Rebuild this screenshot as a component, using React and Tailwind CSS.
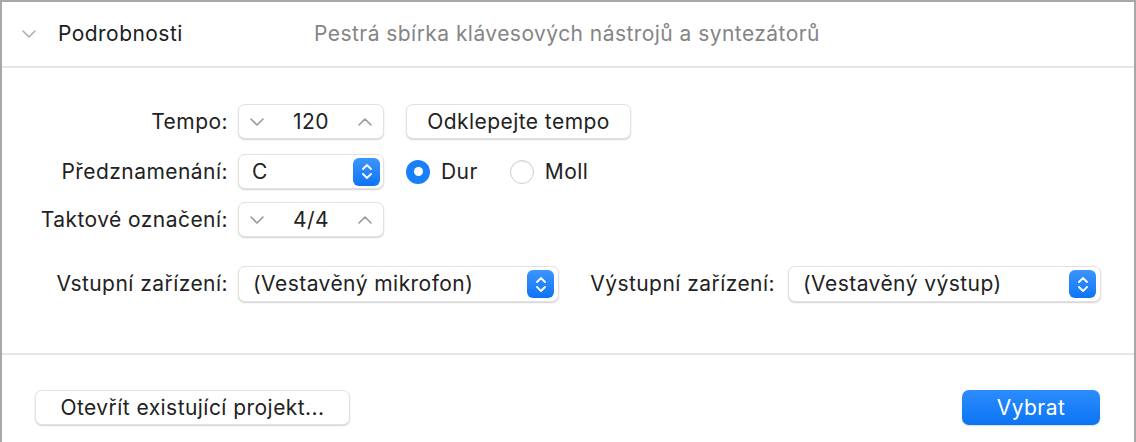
import React, { useState } from 'react';

const font = { fontFamily: 'Inter, "Noto Sans", "Liberation Sans", sans-serif', letterSpacing: '0.45px' };

const Chevron = ({ up, className }) => (
  <svg viewBox="0 0 14 8" className={className} fill="none" stroke="currentColor" strokeWidth="1.6" strokeLinecap="round" strokeLinejoin="round">
    {up ? <path d="M1 7 L7 1 L13 7" /> : <path d="M1 1 L7 7 L13 1" />}
  </svg>
);

const PopupArrows = () => (
  <div className="w-[27px] h-[28px] rounded-[6px] bg-gradient-to-b from-[#3a95fd] to-[#0a74f5] flex flex-col items-center justify-center gap-[3px]">
    <svg viewBox="0 0 10 6" className="w-[10px] h-[6px]" fill="none" stroke="white" strokeWidth="1.8" strokeLinecap="round" strokeLinejoin="round">
      <path d="M1 5 L5 1 L9 5" />
    </svg>
    <svg viewBox="0 0 10 6" className="w-[10px] h-[6px]" fill="none" stroke="white" strokeWidth="1.8" strokeLinecap="round" strokeLinejoin="round">
      <path d="M1 1 L5 5 L9 1" />
    </svg>
  </div>
);

const Box = ({ className = '', children }) => (
  <div className={`bg-white rounded-[7px] border border-[#e2e2e2] shadow-[0_1px_1.5px_rgba(0,0,0,0.18)] flex items-center ${className}`}>
    {children}
  </div>
);

const Stepper = ({ value }) => (
  <Box className="w-[146px] h-[35px] px-[11px] justify-between">
    <Chevron className="w-[14px] h-[8px] text-[#9a9a9a]" />
    <span className="text-[#222]">{value}</span>
    <Chevron up className="w-[14px] h-[8px] text-[#9a9a9a]" />
  </Box>
);

const Select = ({ value, width }) => (
  <Box className={`${width} h-[36px] pl-[14px] pr-[4px] justify-between`}>
    <span className="text-[#222]">{value}</span>
    <PopupArrows />
  </Box>
);

const Radio = ({ checked, label, onClick }) => (
  <button onClick={onClick} className="flex items-center gap-[11px]">
    {checked ? (
      <span className="w-[24px] h-[24px] rounded-full bg-[#1a7ffb] flex items-center justify-center">
        <span className="w-[9px] h-[9px] rounded-full bg-white" />
      </span>
    ) : (
      <span className="w-[24px] h-[24px] rounded-full bg-white border border-[#cfcfcf] shadow-[inset_0_1px_1px_rgba(0,0,0,0.08)]" />
    )}
    <span className="text-[#222]">{label}</span>
  </button>
);

const Label = ({ children }) => (
  <div className="w-[226px] text-right text-[#222] shrink-0 whitespace-nowrap">{children}</div>
);

export default function App() {
  const [mode, setMode] = useState('dur');

  return (
    <div style={font} className="w-[1136px] h-[442px] bg-white text-[21px] border-t-2 border-x-2 border-t-[#a8a8a8] border-x-[#a8a8a8] flex flex-col overflow-hidden">
      <div className="h-[66px] border-b-2 border-[#e6e6e6] flex items-center shrink-0">
        <Chevron className="ml-[20px] w-[14px] h-[8px] text-[#b0b0b0]" />
        <span className="ml-[22px] w-[256px] text-[#1d1d1d]">Podrobnosti</span>
        <span className="text-[#858585]">Pestrá sbírka klávesových nástrojů a syntezátorů</span>
      </div>

      <div className="h-[287px] border-b-2 border-[#e6e6e6] pt-[36px] shrink-0">
        <div className="flex items-center gap-[10px]">
          <Label>Tempo:</Label>
          <Stepper value="120" />
          <button className="ml-[12px] h-[35px] w-[225px] bg-white rounded-[7px] border border-[#e2e2e2] shadow-[0_1px_1.5px_rgba(0,0,0,0.18)] text-[#222]">
            Odklepejte tempo
          </button>
        </div>

        <div className="flex items-center gap-[10px] mt-[15px]">
          <Label>Předznamenání:</Label>
          <Box className="w-[146px] h-[35px] pl-[13px] pr-[3px] justify-between">
            <span className="text-[#222]">C</span>
            <PopupArrows />
          </Box>
          <div className="ml-[12px] flex items-center gap-[32px]">
            <Radio checked={mode === 'dur'} label="Dur" onClick={() => setMode('dur')} />
            <Radio checked={mode === 'moll'} label="Moll" onClick={() => setMode('moll')} />
          </div>
        </div>

        <div className="flex items-center gap-[10px] mt-[13px]">
          <Label>Taktové označení:</Label>
          <Stepper value="4/4" />
        </div>

        <div className="flex items-center gap-[10px] mt-[29px]">
          <Label>Vstupní zařízení:</Label>
          <Select value="(Vestavěný mikrofon)" width="w-[321px]" />
          <div className="w-[209px] pr-[3px] text-right text-[#222] whitespace-nowrap">Výstupní zařízení:</div>
          <Select value="(Vestavěný výstup)" width="w-[313px]" />
        </div>
      </div>

      <div className="flex items-center justify-between pl-[33px] pr-[34px] pt-[35px]">
        <button className="h-[35px] w-[315px] bg-white rounded-[7px] border border-[#e2e2e2] shadow-[0_1px_1.5px_rgba(0,0,0,0.18)] text-[#222]">
          Otevřít existující projekt...
        </button>
        <button className="h-[35px] w-[138px] rounded-[7px] bg-gradient-to-b from-[#2b8cfd] to-[#0a74f5] text-white shadow-[0_1px_1.5px_rgba(0,0,0,0.15)]">
          Vybrat
        </button>
      </div>
    </div>
  );
}
